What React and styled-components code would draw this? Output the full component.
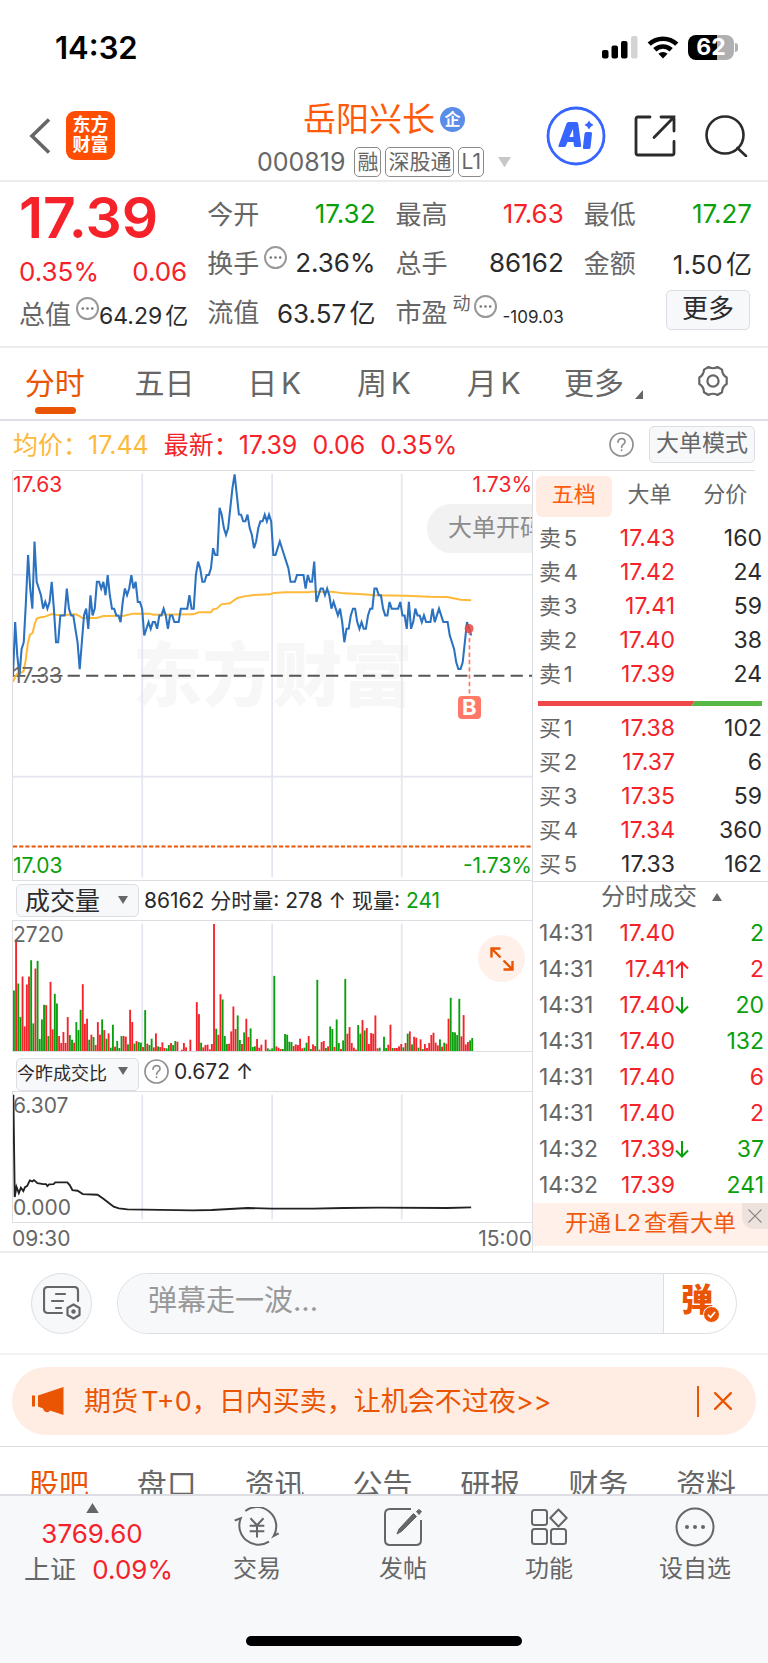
import { useState } from 'react';
import styled, { createGlobalStyle } from 'styled-components';

const red = '#f5222a';
const green = '#0a9f0c';
const orange = '#ea5504';
const dark = '#2b2b2d';
const gray = '#666';
const line = '#dcdee3';

const tones = { up: red, down: green, dark, gray };

const GlobalStyle = createGlobalStyle`
    * {
        box-sizing: border-box;
    }

    body {
        margin: 0;
        background: #fff;
        color: ${dark};
        font-family: Inter, "Noto Sans CJK SC", sans-serif;
        text-autospace: normal;
    }

    button,
    select,
    input {
        margin: 0;
        padding: 0;
        border: 0;
        background: none;
        color: inherit;
        font: inherit;
    }

    table {
        width: 100%;
        border-collapse: collapse;
    }

    td {
        padding: 0;
    }

    svg {
        display: block;
        flex: 0 0 auto;
    }
`;

const Page = styled.main`
    display: flex;
    flex-direction: column;
    min-height: 100vh;
    white-space: nowrap;
    overflow: hidden;
`;

/* status bar */

const StatusBar = styled.div`
    display: flex;
    justify-content: space-between;
    align-items: center;
    height: 94px;
    padding: 0 30px 0 55px;
    color: #000;
    font-size: 31px;
    font-weight: 600;
`;

const StatusIcons = styled.div`
    display: flex;
    align-items: center;
    gap: 9px;
`;

const Battery = styled.div`
    width: 46px;
    height: 25px;
    border-radius: 8px;
    background: linear-gradient(90deg, #000 62%, #b0b0b2 62%);
    color: #fff;
    font-size: 23px;
    font-weight: 700;
    line-height: 25px;
    text-align: center;
`;

const BatteryWrap = styled.div`
    display: flex;
    align-items: center;
    gap: 1px;

    &::after {
        content: '';
        width: 3px;
        height: 9px;
        border-radius: 0 3px 3px 0;
        background: #b0b0b2;
    }
`;

/* header */

const Header = styled.header`
    display: grid;
    grid-template-columns: 1fr auto 1fr;
    align-items: center;
    height: 88px;
    padding: 0 20px 4px;
    border-bottom: 2px solid #ececee;
`;

const HeaderSide = styled.div`
    display: flex;
    align-items: center;
    justify-content: ${(p) => (p.$end ? 'flex-end' : 'flex-start')};
    gap: ${(p) => (p.$end ? '28px' : '15px')};
    padding-left: ${(p) => (p.$end ? 0 : 9)}px;
`;

const IconButton = styled.button`
    display: flex;
    align-items: center;
    justify-content: center;
`;

const Logo = styled.a`
    width: 49px;
    height: 49px;
    padding-top: 4px;
    border-radius: 9px;
    background: #ff4d02;
    color: #fff;
    font-size: 18px;
    font-weight: 700;
    line-height: 20px;
    text-align: center;
    text-decoration: none;
    white-space: normal;
`;

const Title = styled.div`
    display: flex;
    flex-direction: column;
    align-items: center;
    gap: 9px;
    padding-top: 6px;
`;

const Name = styled.h1`
    display: flex;
    align-items: center;
    gap: 5px;
    margin: 0;
    color: #ff5a0a;
    font-size: 33px;
    font-weight: 400;
    line-height: 38px;
`;

const Verified = styled.span`
    width: 25px;
    height: 25px;
    border-radius: 50%;
    background: #5a8de8;
    color: #fff;
    font-size: 16px;
    font-weight: 700;
    line-height: 24px;
    text-align: center;
`;

const CodeLine = styled.div`
    display: flex;
    align-items: center;
    gap: 4px;
    color: ${gray};
    font-size: 25px;
    line-height: 30px;
`;

const Code = styled.span`
    margin-right: 5px;
`;

const Tag = styled.span`
    height: 30px;
    padding: 0 2px;
    border: 1px solid #8a8a8a;
    border-radius: 5px;
    font-size: 21px;
    line-height: 27px;
`;

const CaretButton = styled(IconButton)`
    margin-left: 10px;
`;

/* quote */

const Quote = styled.section`
    display: grid;
    grid-template-columns: repeat(4, minmax(0, 1fr));
    gap: 20px;
    padding: 7px 16px 10px 19px;
    border-bottom: 2px solid #ececee;
`;

const Field = styled.div`
    display: flex;
    align-items: center;
    justify-content: space-between;
    height: ${(p) => p.$height || 49}px;
    color: ${(p) => tones[p.$tone || 'dark']};
    font-size: 26px;
`;

const Label = styled.span`
    display: flex;
    align-items: center;
    gap: 5px;
    padding-bottom: 3px;
    color: ${gray};
    font-size: 26px;

    svg {
        margin-bottom: 8px;
    }
`;

const Sup = styled.sup`
    margin: 0 -2px 12px 0;
    font-size: 18px;
    line-height: 20px;
`;

const Price = styled.div`
    height: 59px;
    color: ${red};
    font-size: 57px;
    font-weight: 600;
    line-height: 58px;
`;

const Value = styled.span`
    font-size: ${(p) => ({ small: 17, middle: 23 })[p.$size] || 26}px;
    padding-top: ${(p) => (p.$size === 'small' ? 10 : 0)}px;
`;

const MoreButton = styled.button`
    width: 84px;
    height: 40px;
    margin: 0 2px 3px auto;
    padding-bottom: 3px;
    border: 1px solid ${line};
    border-radius: 5px;
    background: #f7f8fa;
    font-size: 26px;
    line-height: 34px;
`;

/* period tabs */

const Periods = styled.nav`
    display: grid;
    grid-template-columns: repeat(7, 1fr);
    height: 73px;
    border-bottom: 2px solid ${line};
`;

const Period = styled.button`
    position: relative;
    display: flex;
    align-items: center;
    justify-content: center;
    padding-bottom: 5px;
    color: ${(p) => (p.$active ? orange : gray)};
    font-size: 30px;

    &::after {
        content: '';
        position: absolute;
        bottom: 5px;
        left: calc(50% - 20px);
        width: 41px;
        height: 7px;
        border-radius: 4px;
        background: ${(p) => (p.$active ? orange : 'transparent')};
    }
`;

const Corner = styled.svg`
    align-self: flex-end;
    margin: 0 0 15px 11px;
`;

/* average line above the chart */

const Summary = styled.div`
    display: flex;
    align-items: center;
    gap: 15px;
    height: 50px;
    margin: 0 13px;
    padding-bottom: 2px;
    border-bottom: 1px solid ${line};
    color: ${red};
    font-size: 25px;
    line-height: 46px;
`;

const Average = styled.span`
    color: #fcb93a;
`;

const ModeButton = styled.button`
    height: 37px;
    padding: 0 6px 2px;
    border: 1px solid ${line};
    border-radius: 5px;
    background: #f7f8fa;
    color: ${gray};
    font-size: 23px;
    line-height: 33px;
`;

const HelpButton = styled(IconButton)`
    margin-left: ${(p) => (p.$push ? 'auto' : '0')};
`;

/* charts */

const Board = styled.section`
    display: grid;
    grid-template-columns: minmax(0, 1fr) 236px;
    border-bottom: 2px solid #ececee;
`;

const Charts = styled.div`
    padding-left: 12px;
`;

const Plot = styled.div`
    position: relative;
    height: ${(p) => p.$height}px;
    border-left: 1px solid ${line};
    border-bottom: 1px solid ${line};
    overflow: hidden;

    > svg {
        position: relative;
        width: 100%;
        height: 100%;
    }
`;

const Watermark = styled.div`
    position: absolute;
    top: 50%;
    left: 50%;
    transform: translate(-50%, -50%);
    color: #f7f7f7;
    font-size: 70px;
    font-weight: 900;
    line-height: 80px;
`;

const Mark = styled.span`
    position: absolute;
    ${(p) => p.$y}: ${(p) => (p.$y === 'middle' ? 0 : 2)}px;
    ${(p) => p.$x || 'left'}: 0;
    color: ${(p) => tones[p.$tone || 'gray']};
    font-size: 21px;
    line-height: 24px;
`;

const MiddleMark = styled(Mark)`
    top: calc(50% - 12px);
`;

const Bubble = styled.span`
    position: absolute;
    top: 33px;
    left: calc(100% - 105px);
    height: 49px;
    padding: 0 21px;
    border-radius: 25px;
    background: #f2f2f2;
    color: #8c8c8c;
    font-size: 24px;
    line-height: 48px;
`;

const BuyFlag = styled.span`
    position: absolute;
    top: 225px;
    left: calc(88% - 12px);
    width: 23px;
    height: 23px;
    border-radius: 4px;
    background: #ff7868;
    color: #fff;
    font-size: 22px;
    font-weight: 700;
    line-height: 23px;
    text-align: center;
`;

const Expand = styled.button`
    position: absolute;
    top: 14px;
    right: 7px;
    display: flex;
    align-items: center;
    justify-content: center;
    width: 47px;
    height: 47px;
    border-radius: 50%;
    background: #fff0e9;
`;

const Indicator = styled.div`
    display: flex;
    align-items: center;
    gap: 5px;
    height: 40px;
    padding-left: 4px;
    border-bottom: 1px solid ${line};
    font-size: 21px;
    line-height: 36px;
`;

const Picker = styled.label`
    position: relative;
    width: 123px;
    height: 33px;

    select {
        width: 100%;
        height: 100%;
        padding-left: ${(p) => (p.$small ? 0 : 8)}px;
        border: 1px solid ${line};
        border-radius: 5px;
        background: #f7f8fa;
        font-size: ${(p) => (p.$small ? 18 : 25)}px;
        line-height: 30px;
        appearance: none;
    }

    svg {
        position: absolute;
        top: 12px;
        right: 11px;
        pointer-events: none;
    }
`;

const Green = styled.span`
    color: ${green};
`;

const Axis = styled.div`
    display: flex;
    justify-content: space-between;
    height: 28px;
    padding-top: 3px;
    color: ${gray};
    font-size: 21px;
    line-height: 25px;
`;

/* order book */

const Side = styled.aside`
    display: flex;
    flex-direction: column;
    padding-bottom: 5px;
    border-left: 1px solid ${line};
`;

const BookTabs = styled.div`
    display: grid;
    grid-template-columns: repeat(3, 1fr);
    padding: 5px 5px 4px 3px;
`;

const BookTab = styled.button`
    height: 41px;
    padding-bottom: 4px;
    border-radius: 6px;
    background: ${(p) => (p.$active ? '#ffede4' : 'none')};
    color: ${(p) => (p.$active ? '#ff5a0a' : gray)};
    font-size: 22px;
    line-height: 37px;
`;

const Book = styled.table`
    font-size: 23px;
    line-height: 24px;

    tr {
        height: ${(p) => p.$row}px;
    }

    td:nth-child(1) {
        width: 72px;
        padding-left: 6px;
        color: ${gray};
        font-size: ${(p) => p.$label}px;
    }

    td:nth-child(2) {
        width: 70px;
        text-align: right;
    }

    td:nth-child(3) {
        width: 18px;
    }

    td:nth-child(4) {
        padding-right: ${(p) => p.$end}px;
        text-align: right;
    }
`;

const Cell = styled.td`
    color: ${(p) => tones[p.$tone]};
`;

const Ratio = styled.svg`
    width: calc(100% - 11px);
    margin: 10px 6px 5px 5px;
`;

const TradesButton = styled.button`
    display: flex;
    align-items: center;
    justify-content: center;
    gap: 15px;
    height: 34px;
    padding: 0 0 3px 22px;
    border-top: 1px solid ${line};
    color: ${gray};
    font-size: 24px;
    line-height: 30px;
`;

const Promo = styled.div`
    display: flex;
    align-items: center;
    justify-content: center;
    position: relative;
    height: 43px;
    margin-top: auto;
    background: #fff0e9;

    a {
        padding-bottom: 4px;
        color: #f05a10;
        font-size: 23px;
        line-height: 36px;
        text-decoration: none;
    }

    button {
        position: absolute;
        top: 0;
        right: 0;
        display: flex;
        align-items: center;
        justify-content: center;
        width: 26px;
        height: 26px;
        border-radius: 0 0 0 12px;
        background: #eee2dc;
    }
`;

/* message box */

const Message = styled.form`
    display: flex;
    align-items: center;
    gap: 25px;
    height: 102px;
    padding: 0 31px;
    border-bottom: 2px solid #f3f3f4;
`;

const RoundButton = styled.button`
    display: flex;
    flex: 0 0 auto;
    align-items: center;
    justify-content: center;
    width: 61px;
    height: 61px;
    border: 1px solid ${line};
    border-radius: 50%;
    background: #f7f8fa;
`;

const MessageField = styled.div`
    display: flex;
    flex: 1;
    height: 61px;
    border: 1px solid ${line};
    border-radius: 31px;
    overflow: hidden;

    input {
        flex: 1;
        min-width: 0;
        padding: 0 0 6px 30px;
        background: #f7f8fa;
        font-size: 29px;
        outline: 0;
    }

    input::placeholder {
        color: #999;
        opacity: 1;
    }

    button {
        position: relative;
        width: 73px;
        padding: 0 6px 6px 0;
        border-left: 1px solid ${line};
        color: ${orange};
        font-size: 32px;
        font-weight: 900;
        line-height: 50px;
    }

    svg {
        position: absolute;
        right: 16px;
        bottom: 10px;
    }
`;

/* notice */

const NoticeWrap = styled.div`
    padding: 12px 12px 11px;
    border-bottom: 1px solid ${line};
`;

const Notice = styled.div`
    display: flex;
    align-items: center;
    height: 68px;
    padding: 0 24px 0 20px;
    border-radius: 34px;
    background: #ffede4;
    color: ${orange};

    a {
        flex: 1;
        margin-left: 20px;
        padding-bottom: 4px;
        color: inherit;
        font-size: 27px;
        text-decoration: none;
    }

    button {
        padding-left: 15px;
        border-left: 2px solid ${orange};
        height: 31px;
    }
`;

/* bottom */

const Sections = styled.nav`
    display: grid;
    grid-template-columns: repeat(7, 1fr);
    height: 47px;
    padding: 17px 8px 0 5px;
    overflow: hidden;
`;

const Section = styled.button`
    height: 40px;
    color: ${(p) => (p.$active ? orange : gray)};
    font-size: 30px;
    line-height: 40px;
`;

const Bottom = styled.footer`
    flex: 1;
    display: flex;
    flex-direction: column;
    align-items: center;
    justify-content: space-between;
    border-top: 2px solid ${line};
    background: #f7f8fa;
`;

const Dock = styled.nav`
    display: grid;
    grid-template-columns: 184px repeat(4, 1fr);
    width: 100%;
    height: 92px;
`;

const DockItem = styled.button`
    display: flex;
    flex-direction: column;
    align-items: center;
    gap: 5px;
    padding-top: 11px;
    color: ${gray};
    font-size: 24px;
    line-height: 34px;
`;

const Index = styled.button`
    display: flex;
    flex-direction: column;
    align-items: center;
    padding-top: 7px;
    color: ${red};
    font-size: 26px;
    line-height: 36px;

    svg {
        margin-bottom: 3px;
    }
`;

const IndexName = styled.span`
    margin: 0 13px;
    color: ${gray};
`;

const HomeBar = styled.div`
    width: 36%;
    height: 10px;
    margin-bottom: 17px;
    border-radius: 5px;
    background: #000;
`;

/* price of every minute, in cents over yesterday's close of 17.33 */
const prices = [
    0, 8, 3, 0, 4, 5, 11, 18, 13, 10, 20, 14, 13, 12, 10, 11, 10, 11, 14, 10, 5, 5, 9, 9, 9, 13, 10, 9, 9, 7,
    5, 1, 5, 9, 10, 7, 12, 9, 10, 14, 14, 13, 14, 12, 15, 12, 10, 10, 9, 9, 8, 11, 13, 12, 13, 15, 13, 14, 11, 11,
    10, 6, 7, 8, 7, 8, 8, 7, 9, 9, 10, 9, 7, 9, 9, 8, 8, 8, 10, 10, 10, 10, 12, 10, 10, 15, 17, 16, 14, 14,
    15, 15, 16, 19, 18, 18, 25, 24, 22, 21, 22, 25, 28, 30, 27, 24, 24, 23, 23, 24, 22, 21, 19, 20, 22, 23, 23, 24, 23, 24,
    23, 18, 18, 19, 20, 19, 18, 17, 16, 14, 14, 14, 15, 15, 15, 15, 13, 15, 14, 14, 17, 11, 12, 13, 13, 12, 13, 12, 10, 11,
    10, 9, 10, 8, 5, 7, 7, 9, 10, 10, 8, 7, 8, 7, 7, 9, 10, 10, 13, 13, 12, 12, 10, 9, 9, 11, 10, 10, 10, 10,
    11, 9, 9, 7, 11, 7, 8, 10, 9, 9, 8, 9, 8, 8, 8, 10, 8, 9, 10, 9, 8, 8, 8, 6, 5, 4, 2, 1, 1, 2,
    5, 8, 7, 6,
];

const average =
    '0,634 6,619 13,609 25,606 31,601 37,569 43,519 49,493 57,487 63,461 69,444 81,440 93,438 113,430 128,433 143,434 158,432 183,431 195,437 201,442 243,442 263,436 323,435 348,429 398,429 408,432 525,431 540,425 576,425 582,416 593,414 606,401 631,398 653,382 673,377 701,373 748,371 758,367 793,365 858,365 868,363 928,363 963,368 1018,371 1053,374 1143,375 1213,378 1263,379 1303,387 1333,389';

/* volume of every minute, negative when the price fell */
const volumes = [
    -182, 335, -203, -102, 224, 74, 200, 224, -273, -83, 248, -271, -36, -95, -139, 138, -45, 208, 65, -172, -143, 45, 24, 57, 24, 102, -48, -34, 25, -87,
    -63, -124, 201, 82, 97, -34, 49, -42, 18, 87, 49, -95, 63, -37, 53, -10, -79, 13, -30, -9, -45, 45, 43, -20, 124, 87, -22, 30, -27, -25,
    12, -123, 22, -18, -37, 11, 53, -14, 12, 26, 9, -8, -18, 24, -18, -30, 28, 0, 4, 24, 11, 0, 34, 0, 0, 147, 111, -25, 11, 18,
    19, 5, 21, 382, -67, 49, 171, -155, -45, -21, 22, 59, 134, 66, -107, -33, 21, -56, 97, 42, -68, -12, -14, 36, 10, 19, 0, 34, -8, -4,
    -8, -226, 14, 10, 6, -6, -51, -49, -28, -27, 15, 20, 18, 37, 8, -10, -25, 45, -6, 20, 15, -214, 4, 27, 30, -9, 14, -74, -66, 12,
    -95, -24, 6, -32, -217, 52, 72, 24, 10, 4, -78, -52, 93, -62, 69, 21, 54, 52, 107, 8, -10, 0, -43, -9, 19, 79, -9, 9, 9, 14,
    21, -11, 24, -52, 59, -20, 43, 40, -10, 35, -6, 21, 9, 24, 48, 55, 25, 17, -35, 13, -25, 22, 97, -160, -57, -56, -48, -157, 44, 108,
    20, 27, -32, -39,
];

const ratio =
    '1,8 5,316 10,285 17,304 23,288 30,298 35,286 41,283 49,266 56,269 61,265 71,274 88,277 96,277 100,283 105,278 118,277 123,272 158,272 165,280 173,295 188,297 203,307 246,309 263,321 278,333 293,345 308,350 333,353 523,356 578,355 683,349 753,351 873,351 963,349 1063,348 1263,349 1333,347';

const step = 6.26;

const pricePoints = prices.map((p, i) => `${i * step},${616 - p * 20.2}`).join(' ');

const sells = [
    ['卖5', '17.43', 160, 'up'],
    ['卖4', '17.42', 24, 'up'],
    ['卖3', '17.41', 59, 'up'],
    ['卖2', '17.40', 38, 'up'],
    ['卖1', '17.39', 24, 'up'],
];

const buys = [
    ['买1', '17.38', 102, 'up'],
    ['买2', '17.37', 6, 'up'],
    ['买3', '17.35', 59, 'up'],
    ['买4', '17.34', 360, 'up'],
    ['买5', '17.33', 162, 'dark'],
];

const trades = [
    ['14:31', '17.40', '', 2, 'down'],
    ['14:31', '17.41', 'up', 2, 'up'],
    ['14:31', '17.40', 'down', 20, 'down'],
    ['14:31', '17.40', '', 132, 'down'],
    ['14:31', '17.40', '', 6, 'up'],
    ['14:31', '17.40', '', 2, 'up'],
    ['14:32', '17.39', 'down', 37, 'down'],
    ['14:32', '17.39', '', 241, 'down'],
];

const Caret = ({ up, size = 10, color = gray }) => (
    <svg width={size} height={size * 0.8} viewBox="0 0 10 8">
        <path d={up ? 'M0 8 5 0l5 8z' : 'M0 0h10L5 8z'} fill={color} />
    </svg>
);

const Cross = ({ size, color, width = 2 }) => (
    <svg width={size} height={size} viewBox="0 0 16 16" stroke={color} strokeWidth={width} strokeLinecap="round">
        <path d="M1 1l14 14M15 1 1 15" />
    </svg>
);

const Dots = ({ size = 23, width = 2 }) => (
    <svg width={size} height={size} viewBox="0 0 23 23">
        <circle cx="11.5" cy="11.5" r="10.5" fill="none" stroke="#999" strokeWidth={width} />
        <g fill="#777">
            <circle cx="6.8" cy="11.5" r="1.3" />
            <circle cx="11.5" cy="11.5" r="1.3" />
            <circle cx="16.2" cy="11.5" r="1.3" />
        </g>
    </svg>
);

const Help = () => (
    <svg width="25" height="25" viewBox="0 0 25 25" fill="none" stroke="#909090" strokeWidth="1.7">
        <circle cx="12.5" cy="12.5" r="11.5" />
        <path d="M9 10.2c0-2.2 1.5-3.6 3.5-3.6s3.5 1.3 3.5 3.2c0 2.6-3.4 2.7-3.4 5.4" strokeLinecap="round" />
        <circle cx="12.6" cy="18.2" r=".6" fill="#909090" strokeWidth="1" />
    </svg>
);

const Arrow = ({ down }) => (
    <svg width="14" height="17" viewBox="0 0 14 17" fill="none" stroke={down ? green : red} strokeWidth="2">
        <path d={down ? 'M7 0v15M1 9.5l6 6 6-6' : 'M7 17V2M1 7.5l6-6 6 6'} />
    </svg>
);

const Grid = ({ height, rows = [] }) => (
    <g stroke="#e3e6ee" strokeWidth="5">
        {[376, 754, 1131].map((x) => (
            <path key={x} d={`M${x} 8V${height - 8}`} />
        ))}
        {rows.map((y) => (
            <path key={y} d={`M0 ${y}H1510`} />
        ))}
    </g>
);

const PriceChart = () => (
    <Plot $height={410}>
        <Watermark>东方财富</Watermark>
        <svg viewBox="0 0 1510 1230" preserveAspectRatio="none" fill="none">
            <Grid height={1230} rows={[312, 919]} />
            <path d="M159 616H1510" stroke="#555" strokeWidth="6" strokeDasharray="35.500 18.200" />
            <path d="M0 616h145" stroke="#555" strokeWidth="5" strokeDasharray="36 18" />
            <path d="M0 1129H1510" stroke={orange} strokeWidth="6" strokeDasharray="12 6" />
            <polyline points={average} stroke="#ffb938" strokeWidth="6" />
            <polyline points={pricePoints} stroke="#2b72c0" strokeWidth="6" />
            <path d="M1328 480V680" stroke="#ff7868" strokeWidth="5" strokeDasharray="13 9" />
            <ellipse cx="1327" cy="474" rx="13" ry="14" fill="#e8483f" fillOpacity=".85" />
        </svg>
        <Mark $y="top" $tone="up">17.63</Mark>
        <Mark $y="top" $x="right" $tone="up">1.73%</Mark>
        <MiddleMark $y="middle">17.33</MiddleMark>
        <Mark $y="bottom" $tone="down">17.03</Mark>
        <Mark $y="bottom" $x="right" $tone="down">-1.73%</Mark>
        <Bubble>大单开码</Bubble>
        <BuyFlag>B</BuyFlag>
    </Plot>
);

const VolumeChart = () => (
    <Plot $height={131}>
        <svg viewBox="0 0 1510 391" preserveAspectRatio="none">
            <Grid height={391} />
            {volumes.map((v, i) => (
                <rect key={i} x={i * step} y={391 - Math.abs(v)} width="5.4" height={Math.abs(v)} fill={v > 0 ? red : green} />
            ))}
        </svg>
        <Mark $y="top">2720</Mark>
        <Expand aria-label="展开">
            <svg width="24" height="24" viewBox="0 0 24 24" fill="none" stroke={orange} strokeWidth="2.4">
                <path d="M1.5 10.5v-9h9M1.5 1.5l9 9M22.5 14v8.5h-9M22.5 22.5l-9-9" />
            </svg>
        </Expand>
    </Plot>
);

const RatioChart = () => (
    <Plot $height={131}>
        <svg viewBox="0 0 1510 391" preserveAspectRatio="none" fill="none">
            <Grid height={391} />
            <polyline points={ratio} stroke="#222" strokeWidth="5.5" />
        </svg>
        <Mark $y="top">6.307</Mark>
        <Mark $y="bottom">0.000</Mark>
    </Plot>
);

const BookRows = ({ rows }) => (
    <Book $row={34} $end={6} $label={22}>
        <tbody>
            {rows.map(([name, price, amount, tone]) => (
                <tr key={name}>
                    <td>{name}</td>
                    <Cell $tone={tone}>{price}</Cell>
                    <td />
                    <td>{amount}</td>
                </tr>
            ))}
        </tbody>
    </Book>
);

const App = () => {
    const [period, setPeriod] = useState('分时');
    const [book, setBook] = useState('五档');
    const [section, setSection] = useState('股吧');

    return (
        <Page>
            <GlobalStyle />
            <StatusBar>
                <span>14:32</span>
                <StatusIcons>
                    <svg width="36" height="24" viewBox="0 0 36 24">
                        <rect x="0" y="15" width="6.5" height="8.5" rx="2" />
                        <rect x="9.5" y="10.5" width="6.5" height="13" rx="2" />
                        <rect x="19" y="6" width="6.5" height="17.5" rx="2" />
                        <rect x="29" y="1" width="6.5" height="22.5" rx="2" fill="#d4d4d6" />
                    </svg>
                    <svg width="32" height="24" viewBox="0 0 32 24" fill="none" stroke="#000" strokeWidth="4.6">
                        <path d="M2.2 9.2a20 20 0 0 1 27.6 0" />
                        <path d="M7.8 14.8a12 12 0 0 1 16.4 0" />
                        <path d="M16 23.5l-4.6-4.7a6.6 6.6 0 0 1 9.2 0z" fill="#000" stroke="none" />
                    </svg>
                    <BatteryWrap>
                        <Battery>62</Battery>
                    </BatteryWrap>
                </StatusIcons>
            </StatusBar>

            <Header>
                <HeaderSide>
                    <IconButton aria-label="返回">
                        <svg width="22" height="36" viewBox="0 0 22 36" fill="none" stroke={gray} strokeWidth="3.6">
                            <path d="M20 1.5 3 18l17 16.5" />
                        </svg>
                    </IconButton>
                    <Logo href="#">
                        东方
                        <br />
                        财富
                    </Logo>
                </HeaderSide>
                <Title>
                    <Name>
                        岳阳兴长
                        <Verified>企</Verified>
                    </Name>
                    <CodeLine>
                        <Code>000819</Code>
                        <Tag>融</Tag>
                        <Tag>深股通</Tag>
                        <Tag>L1</Tag>
                        <CaretButton aria-label="展开">
                            <Caret size={13} color="#c8c8c8" />
                        </CaretButton>
                    </CodeLine>
                </Title>
                <HeaderSide $end>
                    <IconButton aria-label="Ai">
                        <svg width="60" height="60" viewBox="0 0 60 60" fill="#3765ff">
                            <circle cx="30" cy="30" r="28" fill="none" stroke="#3765ff" strokeWidth="2.8" />
                            <path
                                d="M22.500 16h8q1.500 0 1.700 1.500l3 22q.2 1.500-1.300 1.500h-4.500q-1.300 0-1.500-1.300l-.4-3.700h-6l-1.500 3.700q-.5 1.300-2 1.300h-4.500q-1.700 0-1-1.500l8-22q.5-1.500 2-1.500zM27 23l-3.600 8h4z"
                                fillRule="evenodd"
                            />
                            <path d="M40.500 26h4q1.700 0 1.500 1.700l-1.500 13.700q-.2 1.600-1.700 1.600h-4.500q-1.600 0-1.400-1.600l1.600-13.700q.2-1.700 2-1.700zM43 14.500q1.200 3.300 4.500 4.500-3.300 1.200-4.500 4.500-1.200-3.300-4.500-4.500 3.300-1.200 4.500-4.500z" />
                        </svg>
                    </IconButton>
                    <IconButton aria-label="分享">
                        <svg width="42" height="42" viewBox="0 0 42 42" fill="none" stroke={dark} strokeWidth="2.8" strokeLinecap="round">
                            <path d="M16 2H4Q2 2 2 4v34q0 2 2 2h34q2 0 2-2V26.5" />
                            <path d="M27 2h13v14M40 2 20 22.5" />
                        </svg>
                    </IconButton>
                    <IconButton aria-label="搜索">
                        <svg width="44" height="42" viewBox="0 0 44 42" fill="none" stroke={dark} strokeWidth="2.6" strokeLinecap="round">
                            <circle cx="21" cy="20" r="18.5" />
                            <path d="M33.5 33l8.5 8" />
                        </svg>
                    </IconButton>
                </HeaderSide>
            </Header>

            <Quote>
                <div>
                    <Price>17.39</Price>
                    <Field $height={46} $tone="up">
                        <span>0.35%</span>
                        <span>0.06</span>
                    </Field>
                    <Field $height={40}>
                        <Label>总值<Dots /></Label>
                        <Value $size="middle">64.29亿</Value>
                    </Field>
                </div>
                <div>
                    <Field $tone="down"><Label>今开</Label>17.32</Field>
                    <Field><Label>换手<Dots /></Label>2.36%</Field>
                    <Field><Label>流值</Label>63.57亿</Field>
                </div>
                <div>
                    <Field $tone="up"><Label>最高</Label>17.63</Field>
                    <Field><Label>总手</Label>86162</Field>
                    <Field>
                        <Label>市盈<Sup>动</Sup><Dots /></Label>
                        <Value $size="small">-109.03</Value>
                    </Field>
                </div>
                <div>
                    <Field $tone="down"><Label>最低</Label>17.27</Field>
                    <Field><Label>金额</Label>1.50亿</Field>
                    <Field><MoreButton>更多</MoreButton></Field>
                </div>
            </Quote>

            <Periods>
                {['分时', '五日', '日K', '周K', '月K'].map((name) => (
                    <Period key={name} $active={period === name} onClick={() => setPeriod(name)}>{name}</Period>
                ))}
                <Period>
                    更多
                    <Corner width="8" height="9" viewBox="0 0 8 9"><path d="M8 0v9H0z" fill={gray} /></Corner>
                </Period>
                <Period aria-label="设置">
                    <svg width="34" height="34" viewBox="0 0 34 34" fill="none" stroke={gray} strokeWidth="2.2" strokeLinejoin="round">
                        <path d="M12.5 3q4.500 2.500 9 0l4.500 2.600q.2 5.200 4.700 7.900v6.500q-4.500 2.700-4.700 8.200L21.500 31q-4.500-2.500-9 0L8 28.200q-.2-5.500-4.700-8.200v-6.500Q7.800 10.800 8 5.600z" />
                        <circle cx="17" cy="17" r="5.6" />
                    </svg>
                </Period>
            </Periods>

            <Summary>
                <Average>均价：17.44</Average>
                <span>最新：17.39</span>
                <span>0.06</span>
                <span>0.35%</span>
                <HelpButton $push aria-label="说明"><Help /></HelpButton>
                <ModeButton>大单模式</ModeButton>
            </Summary>

            <Board>
                <Charts>
                    <PriceChart />
                    <Indicator>
                        <Picker>
                            <select aria-label="指标一"><option>成交量</option></select>
                            <Caret />
                        </Picker>
                        <span>86162 分时量: 278 ↑ 现量: <Green>241</Green></span>
                    </Indicator>
                    <VolumeChart />
                    <Indicator>
                        <Picker $small>
                            <select aria-label="指标二"><option>今昨成交比</option></select>
                            <Caret />
                        </Picker>
                        <HelpButton aria-label="说明"><Help /></HelpButton>
                        <span>0.672 ↑</span>
                    </Indicator>
                    <RatioChart />
                    <Axis>
                        <span>09:30</span>
                        <span>15:00</span>
                    </Axis>
                </Charts>

                <Side>
                    <BookTabs>
                        {['五档', '大单', '分价'].map((name) => (
                            <BookTab key={name} $active={book === name} onClick={() => setBook(name)}>{name}</BookTab>
                        ))}
                    </BookTabs>
                    <BookRows rows={sells} />
                    <Ratio height="5" viewBox="0 0 224 5" preserveAspectRatio="none">
                        <path d="M0 0h157l-4 5H0z" fill="#ee4848" />
                        <path d="M157 0h67v5h-71z" fill="#58b947" />
                    </Ratio>
                    <BookRows rows={buys} />
                    <TradesButton>
                        分时成交
                        <Caret up />
                    </TradesButton>
                    <Book $row={36} $end={4} $label={23}>
                        <tbody>
                            {trades.map(([time, price, move, amount, tone], i) => (
                                <tr key={i}>
                                    <td>{time}</td>
                                    <Cell $tone="up">{price}</Cell>
                                    <td>{move && <Arrow down={move === 'down'} />}</td>
                                    <Cell $tone={tone}>{amount}</Cell>
                                </tr>
                            ))}
                        </tbody>
                    </Book>
                    <Promo>
                        <a href="#">开通L2查看大单</a>
                        <button aria-label="关闭"><Cross size={14} color="#888" width={1.6} /></button>
                    </Promo>
                </Side>
            </Board>

            <Message onSubmit={(e) => e.preventDefault()}>
                <RoundButton type="button" aria-label="弹幕设置">
                    <svg width="38" height="34" viewBox="0 0 38 34" fill="none" stroke={gray} strokeWidth="2.2" strokeLinecap="round">
                        <path d="M35 15V5q0-4-4-4H5Q1 1 1 5v18q0 4 4 4h14" />
                        <path d="M13 8h9M9 15h11M13 22h5" />
                        <path d="M30.500 18.500l6 3.500v7l-6 3.500-6-3.500v-7z" strokeLinejoin="round" />
                        <circle cx="30.5" cy="25.5" r="1.2" fill={gray} />
                    </svg>
                </RoundButton>
                <MessageField>
                    <input aria-label="弹幕" placeholder="弹幕走一波..." />
                    <button type="button">
                        弹
                        <svg width="17" height="17" viewBox="0 0 17 17">
                            <circle cx="8.5" cy="8.5" r="8" fill={orange} stroke="#fff" />
                            <path d="M5 8.8l2.600 2.500L12 6" fill="none" stroke="#fff" strokeWidth="1.8" />
                        </svg>
                    </button>
                </MessageField>
            </Message>

            <NoticeWrap>
                <Notice>
                    <svg width="32" height="28" viewBox="0 0 32 28" fill={orange}>
                        <path d="M0 8.500h3v11H0zM6 8.500 31.500 0v28L18 23.500q-1.500 2.500-4 1.500t-3-3.500L6 19.500z" />
                    </svg>
                    <a href="#">期货T+0，日内买卖，让机会不过夜&gt;&gt;</a>
                    <button aria-label="关闭"><Cross size={18} color={orange} /></button>
                </Notice>
            </NoticeWrap>

            <Sections>
                {['股吧', '盘口', '资讯', '公告', '研报', '财务', '资料'].map((name) => (
                    <Section key={name} $active={section === name} onClick={() => setSection(name)}>{name}</Section>
                ))}
            </Sections>

            <Bottom>
                <Dock>
                    <Index>
                        <Caret up size={13} />
                        <span>3769.60</span>
                        <span><IndexName>上证</IndexName>0.09%</span>
                    </Index>
                    <DockItem>
                        <svg width="46" height="40" viewBox="0 0 46 40" fill="none" stroke={gray} strokeWidth="2">
                            <path d="M11.3 4A19.300 19.300 0 0 1 39.700 29l5-2.700M35 34.700A19.300 19.300 0 0 1 6.700 11.300L.7 13.500" />
                            <path d="M16.500 11.300l6.500 7 6.500-7M23 18v12.500M15.700 18.700h14.600M15.700 24.300h14.600" />
                        </svg>
                        交易
                    </DockItem>
                    <DockItem>
                        <svg width="40" height="40" viewBox="0 0 40 40" fill="none" stroke={gray} strokeWidth="2">
                            <path d="M28 2H7Q2 2 2 7v26q0 5 5 5h26q5 0 5-5V13" />
                            <path d="M30.500 6.500l3 3L18.500 24.500l-4.500 2.500 2-5z M33.500 4.500l2.500-2 2.500 2-2.500 3z" fill={gray} strokeWidth="1" />
                        </svg>
                        发帖
                    </DockItem>
                    <DockItem>
                        <svg width="38" height="40" viewBox="0 0 38 40" fill="none" stroke={gray} strokeWidth="2">
                            <rect x="2" y="3" width="15" height="15" rx="2.5" />
                            <rect x="2" y="22" width="15" height="15" rx="2.5" />
                            <rect x="21" y="22" width="15" height="15" rx="2.5" />
                            <path d="M28.500 2.500l8.200 8.500-8.200 8.500-8.200-8.500z" strokeLinejoin="round" />
                        </svg>
                        功能
                    </DockItem>
                    <DockItem>
                        <svg width="40" height="40" viewBox="0 0 40 40" fill={gray}>
                            <circle cx="20" cy="20" r="18.5" fill="none" stroke={gray} strokeWidth="2" />
                            <circle cx="12" cy="20" r="2" />
                            <circle cx="20" cy="20" r="2" />
                            <circle cx="28" cy="20" r="2" />
                        </svg>
                        设自选
                    </DockItem>
                </Dock>
                <HomeBar />
            </Bottom>
        </Page>
    );
};

export default App;
